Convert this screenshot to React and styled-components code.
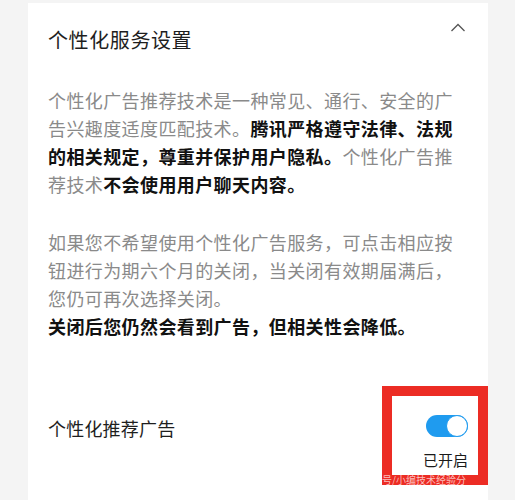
import React, { useState } from "react";
import styled, { createGlobalStyle } from "styled-components";

const GlobalStyle = createGlobalStyle`
  html, body {
    margin: 0;
    padding: 0;
    background: #f4f4f4;
  }
  body {
    font-family: "Noto Sans CJK SC", "Noto Sans", sans-serif;
  }
`;

const Page = styled.div`
  padding: 3px 27px 0 28px;
  height: 497px;
  overflow: hidden;
`;

const Card = styled.div`
  background: #ffffff;
  height: 100%;
  padding: 23px 22px 0 20px;
  box-sizing: border-box;
`;

const Header = styled.div`
  display: flex;
  justify-content: space-between;
  align-items: flex-start;
`;

const Title = styled.h2`
  margin: 0;
  font-size: 20px;
  font-weight: 400;
  line-height: 28px;
  letter-spacing: 0.6px;
  color: #1e1e1e;
`;

const Chevron = styled.svg`
  margin-top: -4px;
  width: 16px;
  height: 12px;
`;

const Text = styled.p`
  width: 410px;
  margin: ${(p) => p.$top}px 0 0;
  font-size: 18px;
  line-height: 28px;
  letter-spacing: 0.4px;
  color: #8a8a8a;
`;

const Strong = styled.b`
  font-weight: 700;
  color: #111111;
`;

const SettingRow = styled.div`
  display: flex;
  justify-content: space-between;
  align-items: flex-start;
  margin: 46px -22px 0 0;
`;

const Label = styled.span`
  margin-top: 28px;
  font-size: 18px;
  line-height: 28px;
  letter-spacing: 0.2px;
  color: #1e1e1e;
`;

const Marked = styled.div`
  position: relative;
  width: 106px;
  box-sizing: border-box;
  border: 10px solid #ec2c24;
  padding: 19px 10px 5px 0;
  display: flex;
  flex-direction: column;
  align-items: flex-end;
`;

const Toggle = styled.button`
  width: 42px;
  height: 22px;
  padding: 0;
  border: none;
  border-radius: 11px;
  background: ${(p) => (p.$on ? "#1f9bef" : "#cccccc")};
  display: flex;
  align-items: center;
  justify-content: ${(p) => (p.$on ? "flex-end" : "flex-start")};
  cursor: pointer;
`;

const Knob = styled.span`
  width: 22px;
  height: 22px;
  box-sizing: border-box;
  border-radius: 50%;
  background: #ffffff;
  border: 1.5px solid #1f9bef;
`;

const State = styled.span`
  margin-top: 13px;
  font-size: 15px;
  line-height: 20px;
  color: #1a1a1a;
`;

const Watermark = styled.span`
  position: absolute;
  left: -10px;
  bottom: -10px;
  font-size: 10px;
  line-height: 10px;
  white-space: nowrap;
  color: rgba(255, 220, 220, 0.85);
`;

function App() {
  const [on, setOn] = useState(true);

  return (
    <>
      <GlobalStyle />
      <Page>
        <Card>
          <Header>
            <Title>个性化服务设置</Title>
            <Chevron viewBox="0 0 16 12" fill="none">
              <path d="M1.5 9 L8 2.5 L14.5 9" stroke="#555" strokeWidth="1.3" />
            </Chevron>
          </Header>

          <Text $top={32}>
            个性化广告推荐技术是一种常见、通行、安全的广告兴趣度适度匹配技术。
            <Strong>腾讯严格遵守法律、法规的相关规定，尊重并保护用户隐私。</Strong>
            个性化广告推荐技术<Strong>不会使用用户聊天内容。</Strong>
          </Text>

          <Text $top={30}>
            如果您不希望使用个性化广告服务，可点击相应按钮进行为期六个月的关闭，当关闭有效期届满后，您仍可再次选择关闭。
            <br />
            <Strong>关闭后您仍然会看到广告，但相关性会降低。</Strong>
          </Text>

          <SettingRow>
            <Label>个性化推荐广告</Label>
            <Marked>
              <Toggle $on={on} onClick={() => setOn(!on)}>
                <Knob />
              </Toggle>
              <State>{on ? "已开启" : "已关闭"}</State>
              <Watermark>号/小编技术经验分</Watermark>
            </Marked>
          </SettingRow>
        </Card>
      </Page>
    </>
  );
}

export default App;
